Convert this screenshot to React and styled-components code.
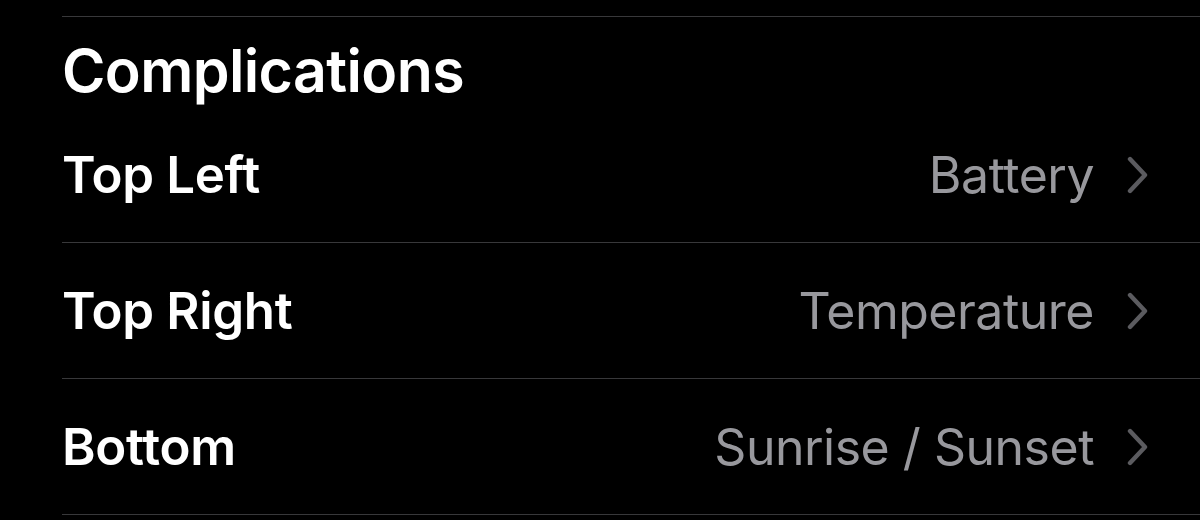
import React from 'react'
import styled, { createGlobalStyle } from 'styled-components'

const Global = createGlobalStyle`
  html, body {
    margin: 0;
    padding: 0;
    background: #000;
  }
  body {
    font-family: Inter, "Noto Sans", sans-serif;
    -webkit-font-smoothing: antialiased;
  }
`

const rows = [
  { label: 'Top Left', value: 'Battery' },
  { label: 'Top Right', value: 'Temperature' },
  { label: 'Bottom', value: 'Sunrise / Sunset' },
]

const Chevron = () => (
  <svg width="24" height="38" viewBox="0 0 24 38" fill="none">
    <path d="M4 3 L19 19 L4 35" stroke="#5b5b5f" strokeWidth="4.4" strokeLinecap="round" strokeLinejoin="round" />
  </svg>
)

const App = () => {
  return (
    <>
      <Global />
      <Page>
        <Section>
          <Header>Complications</Header>
          {rows.map((r) => (
            <Row key={r.label}>
              <Label>{r.label}</Label>
              <Value>{r.value}</Value>
              <Chevron />
            </Row>
          ))}
        </Section>
      </Page>
    </>
  )
}

const Page = styled.div`
  width: 1200px;
  height: 520px;
  overflow: hidden;
  padding-left: 62px;
  padding-top: 16px;
  box-sizing: border-box;
`

const Section = styled.div`
  border-top: 1px solid #38383a;
`

const Header = styled.h2`
  margin: 0;
  height: 90px;
  box-sizing: border-box;
  padding-top: 16px;
  display: flex;
  align-items: center;
  font-size: 59px;
  font-weight: 600;
  color: #fff;
  letter-spacing: -0.6px;
`

const Row = styled.div`
  height: 135px;
  border-bottom: 1px solid #38383a;
  display: flex;
  align-items: center;
  padding-right: 50px;
`

const Label = styled.span`
  flex: 1;
  font-size: 51px;
  font-weight: 600;
  color: #fff;
  letter-spacing: -0.3px;
`

const Value = styled.span`
  font-size: 50px;
  font-weight: 400;
  color: #98989d;
  margin-right: 32px;
  letter-spacing: -0.5px;
`

export default App
